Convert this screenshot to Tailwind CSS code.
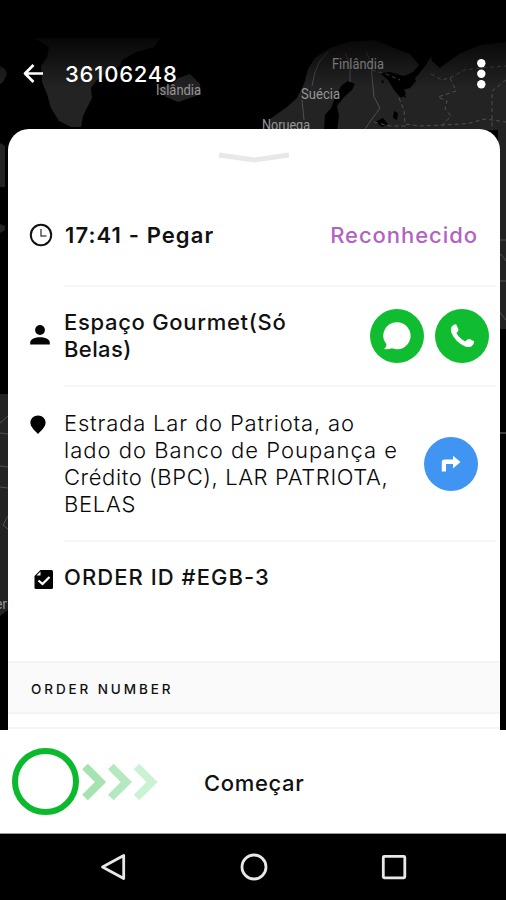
<!DOCTYPE html>
<html lang="pt">
<head>
<meta charset="utf-8">
<title>36106248</title>
<script src="https://cdn.jsdelivr.net/npm/@tailwindcss/browser@4"></script>
</head>
<body class="bg-black">
<div class="relative flex h-[900px] w-[506px] flex-col overflow-hidden bg-black font-['Inter','Noto_Sans',sans-serif] text-[22px] leading-[27px] text-[#111]">
  <!-- Map backdrop -->
  <svg class="absolute inset-0" width="506" height="730" viewBox="0 0 506 730">
    <defs><linearGradient id="fade" x1="0" y1="0" x2="0" y2="1"><stop offset="0" stop-color="#000"/><stop offset=".3" stop-color="#000"/><stop offset="1" stop-color="#000" stop-opacity="0"/></linearGradient></defs>
    <g fill="#232323">
      <path d="M34 38L160 38 154 47 136 52 122 60 120 66 106 73 96 81 91 88 92 98 87 108 83 116 81 127 71 127 59 121 51 108 47 94 42 82 41 66 47 58 49 47z"/>
      <path d="M0 66L5 69 7 74 3 82 0 84z"/>
      <path d="M158 88L173 84 178 78 190 74 200 84 201 94 190 98 178 102 166 97z"/>
      <path d="M270 119L287 107 297 98 304 84 308 69 315 58 330 48 348 42 375 40 394 48 410 54 419 65 413 72 404 76 390 72 380 73 388 80 394 90 401 98 406 94 402 85 411 84 417 76 426 65 431 56 432 61 440 68 448 62 459 54 480 45 506 42V329H498V130H270z"/>
      <path d="M0 143L5 146V187H0zM0 224L5 226V230L0 233zM0 394H8V610L0 616z"/>
    </g>
    <g fill="#000">
      <path d="M341 86L348 81 355 84 352 90 344 97 337 106 339 116 337 130H324L325 115 331 108 335 98z"/>
      <path d="M392 73L400 79 408 80 414 77 416 81 410 88 403 90 406 98 399 94 396 87z"/>
      <path d="M375 122l8-4 5 6-6 3zM394 111l4 2-1 7-4-2zM381 80l3 1-1 3z"/>
    </g>
    <g fill="none" stroke="#505050" stroke-width="1">
      <path d="M328 52L320 61 315 72 312 86M302 100L304 120M345 53L350 64 350 82M366 52L371 62 372 76 374 97 380 108 372 119 365 129"/>
      <path d="M372 70L386 74 400 80M431 74L442 80 452 77 464 70 480 68 506 66M450 78L456 91 438 97 447 101 445 109 451 116 441 127M399 98L404 110 405 124 420 126 443 125 462 124 470 123 485 119 506 122M506 80L492 91 492 130M374 122L390 126 408 126" stroke-dasharray="4 3"/>
      <path d="M499 240h7M499 253q5 4 7 8M498 281h8M498 310l8 10M0 423l8-7M0 433l8 1M0 466l8 1M0 487l8 1M8 516l-5 9 5 4"/>
      <path d="M498 433h8" stroke="#777"/>
    </g>
    <rect width="506" height="88" fill="url(#fade)"/>
    <g fill="#969696" font-family="Roboto,sans-serif" font-size="14">
      <text x="156" y="95" textLength="45" lengthAdjust="spacingAndGlyphs">Islândia</text>
      <text x="332" y="69" textLength="52" lengthAdjust="spacingAndGlyphs" fill="#777">Finlândia</text>
      <text x="301" y="98.500" textLength="39" lengthAdjust="spacingAndGlyphs">Suécia</text>
      <text x="262" y="129.500" textLength="48" lengthAdjust="spacingAndGlyphs">Noruega</text>
      <text x="-5" y="609" textLength="12">er</text>
    </g>
  </svg>

  <!-- App bar -->
  <header class="relative flex h-[129px] shrink-0 items-center pt-[18px] pr-4 pl-[23px] font-medium text-white">
    <svg width="20" height="20" viewBox="0 0 20 20" fill="none" stroke="#fff" stroke-width="2.700" stroke-linejoin="round"><path d="M20 9.500H2M10.500 1L2 9.500l8.500 8.500"/></svg>
    <h1 class="ml-[22px] flex-1 pt-px tracking-[.8px]">36106248</h1>
    <svg width="18" height="32" viewBox="0 0 18 32" fill="#fff"><circle cx="9.300" cy="5.300" r="4.200"/><circle cx="9.300" cy="15.800" r="4.200"/><circle cx="9.300" cy="26.300" r="4.200"/></svg>
  </header>

  <!-- Sheet -->
  <main class="relative mr-[6px] ml-[8px] flex h-[601px] shrink-0 flex-col overflow-hidden rounded-t-[21px] bg-white">
    <div class="flex h-[56px] justify-center pt-[22px]">
      <svg width="72" height="14" viewBox="0 0 72 14" fill="none" stroke="#e8e8e8" stroke-width="5"><path d="M1 4L36 9 71 4"/></svg>
    </div>
    <section class="flex h-[100px] items-center pl-[21px]">
      <svg class="w-9" width="36" height="24" viewBox="0 0 36 24" fill="none" stroke="#111" stroke-width="2"><circle cx="12" cy="12" r="10.200"/><path d="M12 6v7h5.500" stroke="#555" stroke-width="1.500"/></svg>
      <div class="flex h-full flex-1 items-center justify-between pt-px pr-[22px]">
        <b class="font-semibold tracking-[1.1px]">17:41 - Pegar</b>
        <span class="font-medium tracking-[.95px] text-[#b163c4]">Reconhecido</span>
      </div>
    </section>
    <section class="flex h-[100px] items-center pr-1 pl-[21px]">
      <svg width="35" height="24" viewBox="0 0 35 24" fill="#050505"><circle cx="11" cy="7" r="4.900"/><path d="M1.200 21.500V19.500C1.200 16 6.500 14.200 11 14.200S20.800 16 20.800 19.500v2z"/></svg>
      <div class="flex h-full flex-1 items-center border-t-2 border-[#f6f6f6] pr-[7px]">
        <p class="flex-1 font-medium whitespace-nowrap"><span class="tracking-[.7px]">Espaço Gourmet(Só</span><br><span class="tracking-[.4px]">Belas)</span></p>
        <div class="flex gap-[11px]">
          <span class="flex size-[54px] items-center justify-center rounded-full bg-[#10bc30]"><svg width="30" height="30" viewBox="0 0 30 30" fill="#fff"><path d="M15 1.300A13.500 13.500 0 1 1 10 27.300Q6.500 28.500 2 28.100 4.500 26.500 4.500 23.500A13.500 13.500 0 0 1 15 1.300z"/></svg></span>
          <span class="flex size-[54px] items-center justify-center rounded-full bg-[#10bc30]"><svg width="30" height="30" viewBox="0 0 24 24" fill="#fff"><path d="M3.600 4.500Q5.200 2.600 7.300 2.600L9.200 6.800Q9.400 8.100 7.500 9.600 10 14.100 14.600 16.300L16.300 14.700Q17.300 14 18.500 14.600L21.700 16.200Q21.900 18.400 19.500 20.300 17.500 21.400 14.500 20.400 6.500 16.800 3.400 9.200 2.600 6.200 3.600 4.500z"/></svg></span>
        </div>
      </div>
    </section>
    <section class="flex h-[155px] pr-1 pl-[21px]">
      <svg class="mt-[29px]" width="35" height="22" viewBox="0 0 35 22"><path d="M9 1.500C4.700 1.500 1.400 4.700 1.400 8.600 1.400 13 5.500 16.500 9 20c3.500-3.500 7.600-7 7.600-11.400C16.600 4.700 13.300 1.500 9 1.500z"/></svg>
      <div class="flex h-full flex-1 items-center border-t-2 border-[#f6f6f6] pr-[18px]">
        <p class="flex-1 font-light whitespace-nowrap text-[#080808]"><span class="tracking-[.82px]">Estrada Lar do Patriota, ao</span><br><span class="tracking-[1px]">lado do Banco de Poupança e</span><br><span class="tracking-[.6px]">Crédito (BPC), LAR PATRIOTA,</span><br><span class="tracking-[.7px]">BELAS</span></p>
        <span class="flex size-[54px] items-center justify-center rounded-full bg-[#4095f2]"><svg width="20" height="18" viewBox="0 0 20 18" fill="#fff"><path d="M.8 16.500V7.200Q.8 4.500 3.500 4.500H12V.7L19.500 7 12 13.500V9H5V16.500z"/></svg></span>
      </div>
    </section>
    <section class="flex h-[121px] pr-1 pl-[26px]">
      <svg class="mt-[30px]" width="30" height="20" viewBox="0 0 30 20"><path d="M6.500 0H17.500q1.500 0 1.500 1.500V17.500q0 1.500-1.500 1.500H2q-1.500 0-1.500-1.500V6z"/><path d="M2.500 5.500L6.500 1.500V5.500z" fill="#fff"/><path d="M4.500 10.500L8.500 14 15.500 7" fill="none" stroke="#fff" stroke-width="2.300"/></svg>
      <div class="flex-1 border-t-2 border-[#f6f6f6] pt-[22px] font-medium tracking-[1.05px]">ORDER ID #EGB-3</div>
    </section>
    <div class="flex h-[53px] items-center border-y-2 border-[#f4f4f4] bg-[#fafafa] pt-[3px] pl-[23px] text-[13.5px] font-medium tracking-[2.9px]">ORDER NUMBER</div>
    <div class="h-[15px] border-b-2 border-[#f5f5f5]"></div>
  </main>

  <!-- Swipe action -->
  <footer class="relative flex h-[104px] w-full shrink-0 items-center border-b border-[#999] bg-white">
    <span class="mb-px ml-[12px] size-[67px] rounded-full border-[6.500px] border-[#0bb92c]"></span>
    <svg class="ml-[2px]" width="78" height="40" viewBox="0 0 78 40" fill="none" stroke-width="8"><path d="M4 4.500L19.500 20 4 35.500" stroke="#a5e4b0"/><path d="M29.800 4.500L45.300 20 29.800 35.500" stroke="#b4e9bf"/><path d="M55.500 4.500L71 20 55.500 35.500" stroke="#ccf2d6"/></svg>
    <span class="ml-[45px] pt-[3px] font-medium tracking-[.65px]">Começar</span>
  </footer>
  <nav class="relative flex h-[66px] w-full shrink-0 items-center justify-between bg-black pr-[98px] pl-[100px]">
    <svg width="28" height="28" viewBox="0 0 28 28" fill="none" stroke="#e8e8e8" stroke-width="2.800" stroke-linejoin="round"><path d="M23.700 2.500V25.500L2.500 14z"/></svg>
    <svg width="28" height="28" viewBox="0 0 28 28" fill="none" stroke="#e8e8e8" stroke-width="2.800"><circle cx="14" cy="14" r="12"/></svg>
    <svg width="28" height="28" viewBox="0 0 28 28" fill="none" stroke="#e8e8e8" stroke-width="2.800"><rect x="3.300" y="3.300" width="21.500" height="21.500" rx="1"/></svg>
  </nav>
</div>
</body>
</html>
